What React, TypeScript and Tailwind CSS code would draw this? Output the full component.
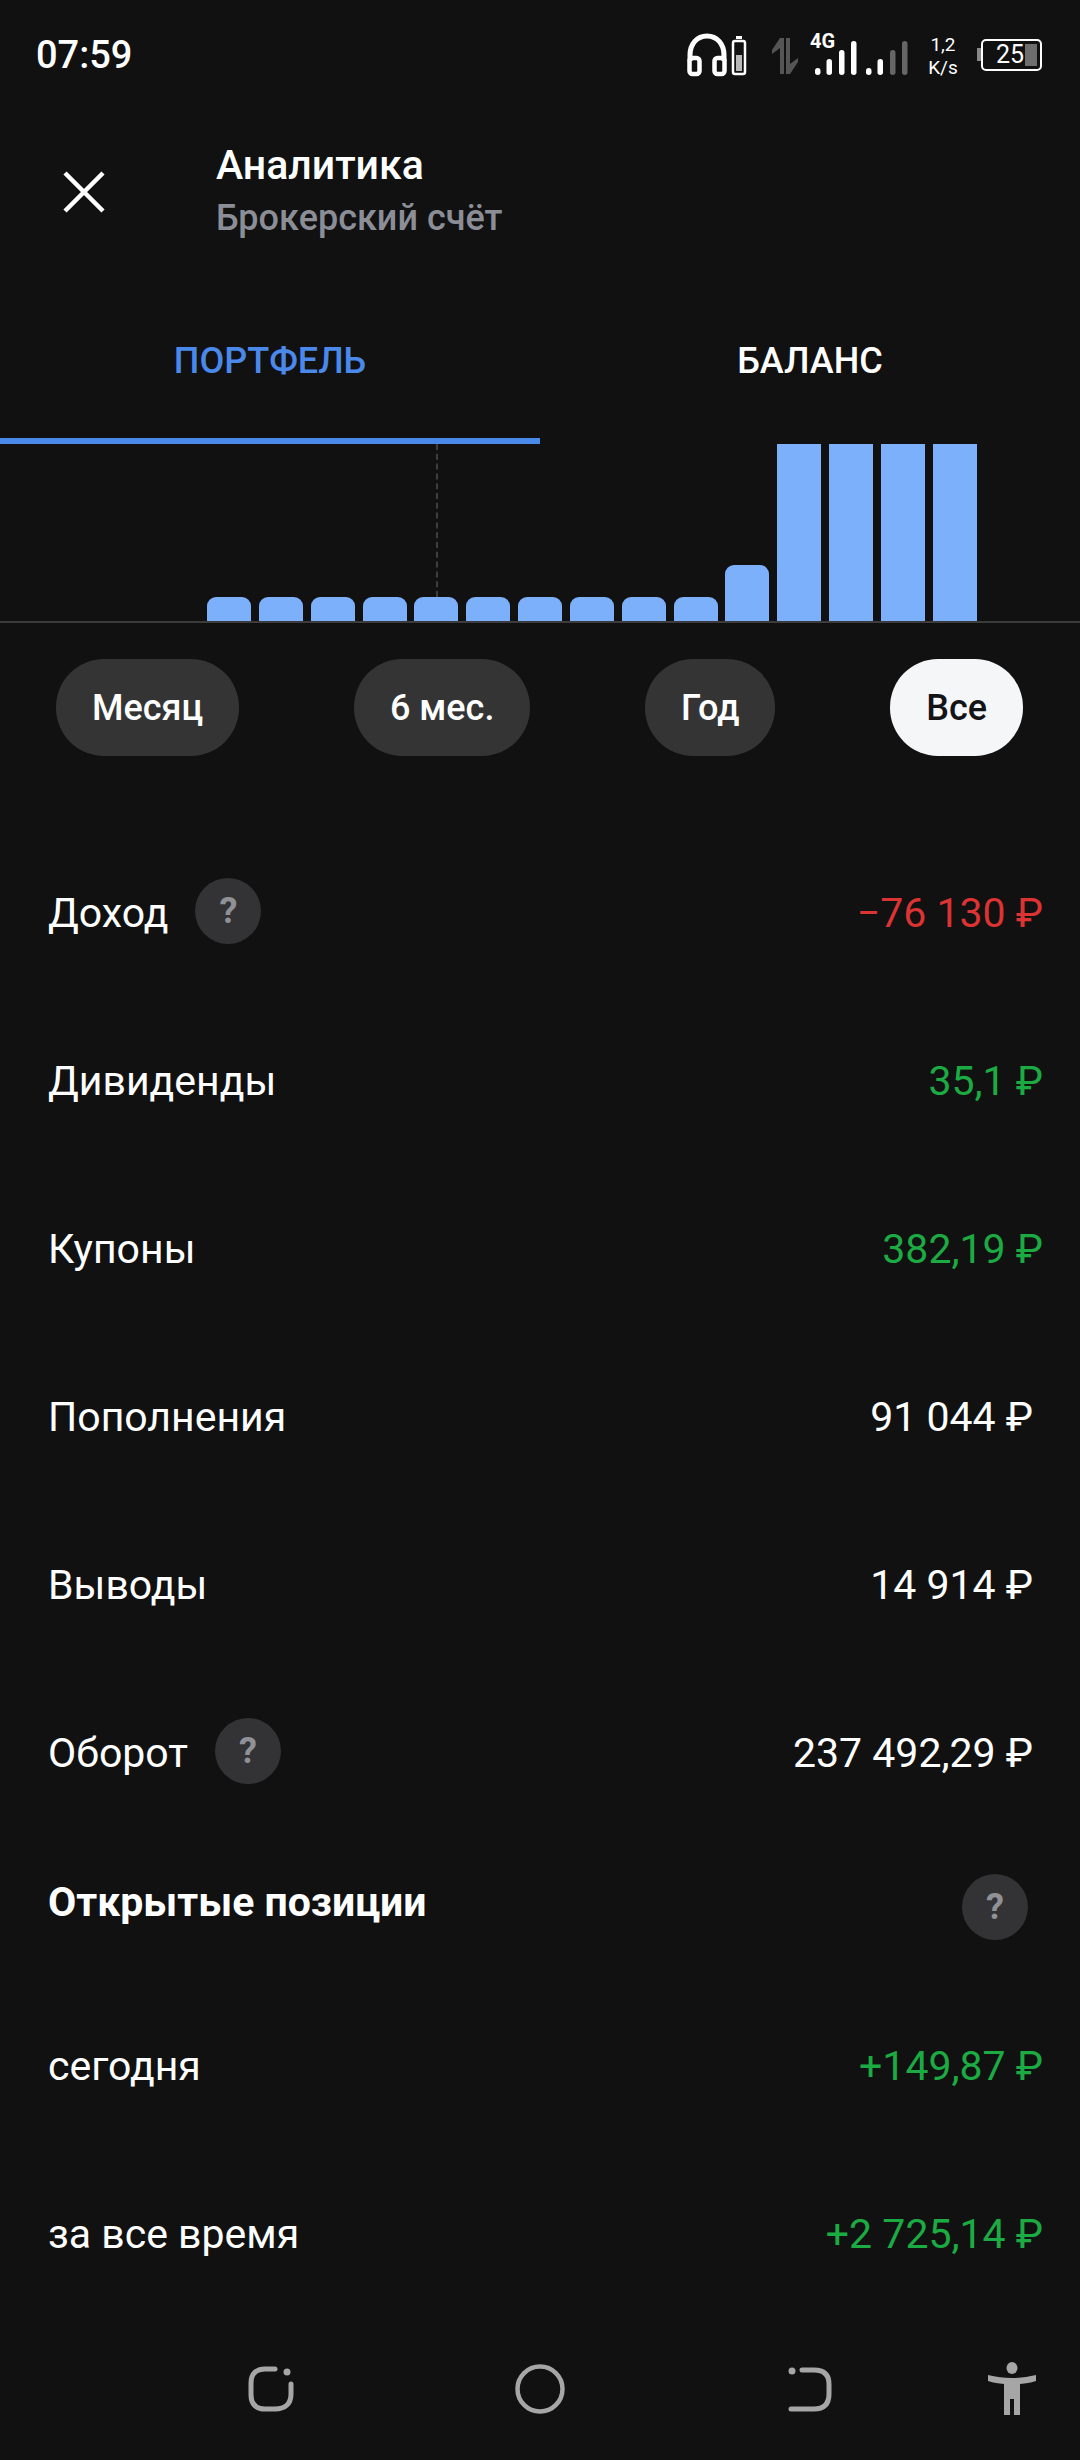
import React from "react";

const bars = [0, 1, 2, 3, 4, 5, 6, 7, 8, 9];

function Q({ className = "" }: { className?: string }) {
  return (
    <div className={"w-[66px] h-[66px] rounded-full bg-[#333335] flex items-center justify-center text-[#8f9197] text-[36px] font-bold " + className}>?</div>
  );
}

function Row({ label, value, color, q, inset }: { label: string; value: string; color: string; q?: boolean; inset?: boolean }) {
  return (
    <div className="h-[168px] flex items-center justify-between pl-[48px] pr-[37px]">
      <div className="flex items-center gap-[27px]">
        <span className="text-[41px] text-white leading-none">{label}</span>
        {q && <Q className="-mt-[5px]" />}
      </div>
      <span className={"text-[41px] leading-none " + color + (inset ? " mr-[10px]" : "")}>{value}</span>
    </div>
  );
}

function Pill({ text, active }: { text: string; active?: boolean }) {
  return (
    <div className={"h-[97px] px-[36px] rounded-[48px] flex items-center justify-center text-[36px] font-medium " + (active ? "bg-[#f5f6f8] text-[#141416]" : "bg-[#343435] text-white")}>
      {text}
    </div>
  );
}

export default function App() {
  return (
    <div className="w-[1080px] h-[2460px] bg-[#111112] overflow-hidden flex flex-col text-white" style={{ fontFamily: "Roboto, 'Noto Sans', sans-serif" }}>
      {/* status bar */}
      <div className="h-[110px] flex items-center justify-between pl-[36px] pr-[38px] shrink-0">
        <span className="text-[38px] font-medium leading-none">07:59</span>
        <div className="flex items-center">
          <svg width="60" height="44" viewBox="0 0 60 44" fill="none" className="mr-[24px]">
            <path d="M3 28V22C3 11 10 3 20 3C30 3 37 11 37 22V28" stroke="#fff" strokeWidth="5" />
            <rect x="2.5" y="25" width="10" height="16" rx="3" stroke="#fff" strokeWidth="4.5" />
            <rect x="27.5" y="25" width="10" height="16" rx="3" stroke="#fff" strokeWidth="4.5" />
            <rect x="46" y="8" width="12" height="33" rx="2" stroke="#fff" strokeWidth="2.5" />
            <rect x="49" y="3" width="6" height="3" fill="#fff" />
            <rect x="49" y="22" width="6" height="16" fill="#b8b8b8" />
          </svg>
          <svg width="28" height="36" viewBox="0 0 28 36" className="mr-[11px] mt-[1px]">
            <path d="M9 0H13V36H9V10L1 16V12Z" fill="#555" />
            <path d="M15 0H19V26L27 20V24L19 36H15Z" fill="#555" />
          </svg>
          <div className="relative w-[100px] h-[38px] mt-[6px] mr-[17px]">
            <span className="absolute left-[0px] -top-[8px] text-[20px] font-bold leading-none">4G</span>
            <svg width="100" height="38" viewBox="0 0 100 38" className="block">
              <rect x="5" y="29" width="5.5" height="7" rx="2.7" fill="#fff" />
              <rect x="16.5" y="20" width="5.5" height="16" rx="2.7" fill="#fff" />
              <rect x="29" y="11" width="5.5" height="25" rx="2.7" fill="#fff" />
              <rect x="41" y="2" width="5.5" height="34" rx="2.7" fill="#fff" />
              <rect x="56" y="29" width="5.5" height="7" rx="2.7" fill="#fff" />
              <rect x="67.5" y="20" width="5.5" height="16" rx="2.7" fill="#fff" />
              <rect x="80" y="11" width="5.5" height="25" rx="2.7" fill="#666" />
              <rect x="92" y="2" width="5.5" height="34" rx="2.7" fill="#666" />
            </svg>
          </div>
          <div className="w-[32px] flex flex-col items-center text-[19px] leading-[23px] mr-[17px] mt-[1px]">
            <span>1,2</span>
            <span>K/s</span>
          </div>
          <div className="relative w-[66px] h-[32px]">
            <svg width="66" height="32" viewBox="0 0 66 32" className="block">
              <path d="M1 9H5V22H1Z" fill="#888" />
              <rect x="6" y="1" width="59" height="30" rx="4" fill="none" stroke="#fff" strokeWidth="2" />
              <rect x="49" y="5" width="12" height="22" fill="#6e6e6e" />
            </svg>
            <span className="absolute left-[20px] top-[3px] text-[25px] leading-[26px]">25</span>
          </div>
        </div>
      </div>

      {/* header */}
      <div className="h-[103px] flex items-center shrink-0 mt-[30px]">
        <div className="w-[168px] pl-[63px] shrink-0">
          <svg width="42" height="42" viewBox="0 0 42 42">
            <path d="M2 2L40 40M40 2L2 40" stroke="#fff" strokeWidth="4.5" />
          </svg>
        </div>
        <div className="flex flex-col ml-[48px]">
          <span className="text-[41px] font-medium leading-[52px]">Аналитика</span>
          <span className="text-[36px] font-medium leading-[52px] text-[#8b8e96] mt-[1px]">Брокерский счёт</span>
        </div>
      </div>

      {/* tabs */}
      <div className="h-[120px] mt-[58px] flex shrink-0 text-[36px] font-medium">
        <div className="w-[540px] flex items-center justify-center text-[#4a88ea]"><span>ПОРТФЕЛЬ</span></div>
        <div className="w-[540px] flex items-center justify-center"><span>БАЛАНС</span></div>
      </div>
      <div className="w-[540px] h-[6px] bg-[#4a88ea] shrink-0 mt-[17px]" />

      {/* chart */}
      <div className="h-[179px] border-b-2 border-[#3c3c3d] flex items-end gap-[7.85px] pl-[207px] shrink-0 relative">
        <div className="absolute left-[436px] top-0 h-[153px] border-l-2 border-dashed border-[#3e3e40]" />
        {bars.map((i) => (
          <div key={i} className="w-[44px] h-[24px] bg-[#7db0fb] rounded-t-[9px]" />
        ))}
        <div className="w-[44px] h-[56px] bg-[#7db0fb] rounded-t-[9px]" />
        {[0, 1, 2, 3].map((i) => (
          <div key={i} className="w-[44px] h-[177px] bg-[#7db0fb]" />
        ))}
      </div>

      {/* period */}
      <div className="flex justify-between pl-[56px] pr-[57px] mt-[36px] shrink-0">
        <Pill text="Месяц" />
        <Pill text="6 мес." />
        <Pill text="Год" />
        <Pill text="Все" active />
      </div>

      {/* rows */}
      <div className="flex flex-col mt-[73px] shrink-0">
        <Row label="Доход" value="−76 130 ₽" color="text-[#dc3333]" q />
        <Row label="Дивиденды" value="35,1 ₽" color="text-[#1cab42]" />
        <Row label="Купоны" value="382,19 ₽" color="text-[#1cab42]" />
        <Row label="Пополнения" value="91 044 ₽" color="text-white" inset />
        <Row label="Выводы" value="14 914 ₽" color="text-white" inset />
        <Row label="Оборот" value="237 492,29 ₽" color="text-white" inset q />
      </div>
      <div className="h-[130px] flex items-center justify-between pl-[48px] pr-[52px] shrink-0">
        <span className="text-[41px] font-bold leading-none">Открытые позиции</span>
        <Q className="mt-[10px]" />
      </div>
      <div className="flex flex-col mt-[15px] shrink-0">
        <Row label="сегодня" value="+149,87 ₽" color="text-[#1cab42]" />
        <Row label="за все время" value="+2 725,14 ₽" color="text-[#1cab42]" />
      </div>

      {/* nav */}
      <div className="h-[54px] mt-[44px] flex items-center pl-[248px] shrink-0">
        <svg width="46" height="46" viewBox="0 0 46 46" fill="none" className="mr-[221px] shrink-0">
          <path d="M27 3H17C8 3 3 8 3 17V29C3 38 8 43 17 43H27C37 43 43 38 43 28V18" stroke="#a6a6a6" strokeWidth="5" strokeLinecap="round" />
          <circle cx="39" cy="6" r="3.5" fill="#a6a6a6" />
        </svg>
        <svg width="50" height="50" viewBox="0 0 50 50" fill="none" className="mr-[223px] shrink-0">
          <circle cx="25" cy="25" r="22.5" stroke="#a6a6a6" strokeWidth="4.5" />
        </svg>
        <svg width="44" height="46" viewBox="0 0 44 46" fill="none" className="mr-[156px] shrink-0">
          <path d="M14 4H26C36 4 41 9 41 18V28C41 38 36 43 26 43H3" stroke="#a6a6a6" strokeWidth="5" strokeLinecap="round" />
          <circle cx="4" cy="5" r="3.5" fill="#a6a6a6" />
        </svg>
        <svg width="48" height="54" viewBox="0 0 48 54" fill="#a6a6a6" className="shrink-0">
          <ellipse cx="24" cy="6" rx="5.5" ry="6" />
          <path d="M0 13C8 15 16 16 24 16C32 16 40 15 48 13V19C42 21 38 21 32 22V53H26V37H22V53H16V22C10 21 6 21 0 19Z" />
        </svg>
      </div>
    </div>
  );
}
